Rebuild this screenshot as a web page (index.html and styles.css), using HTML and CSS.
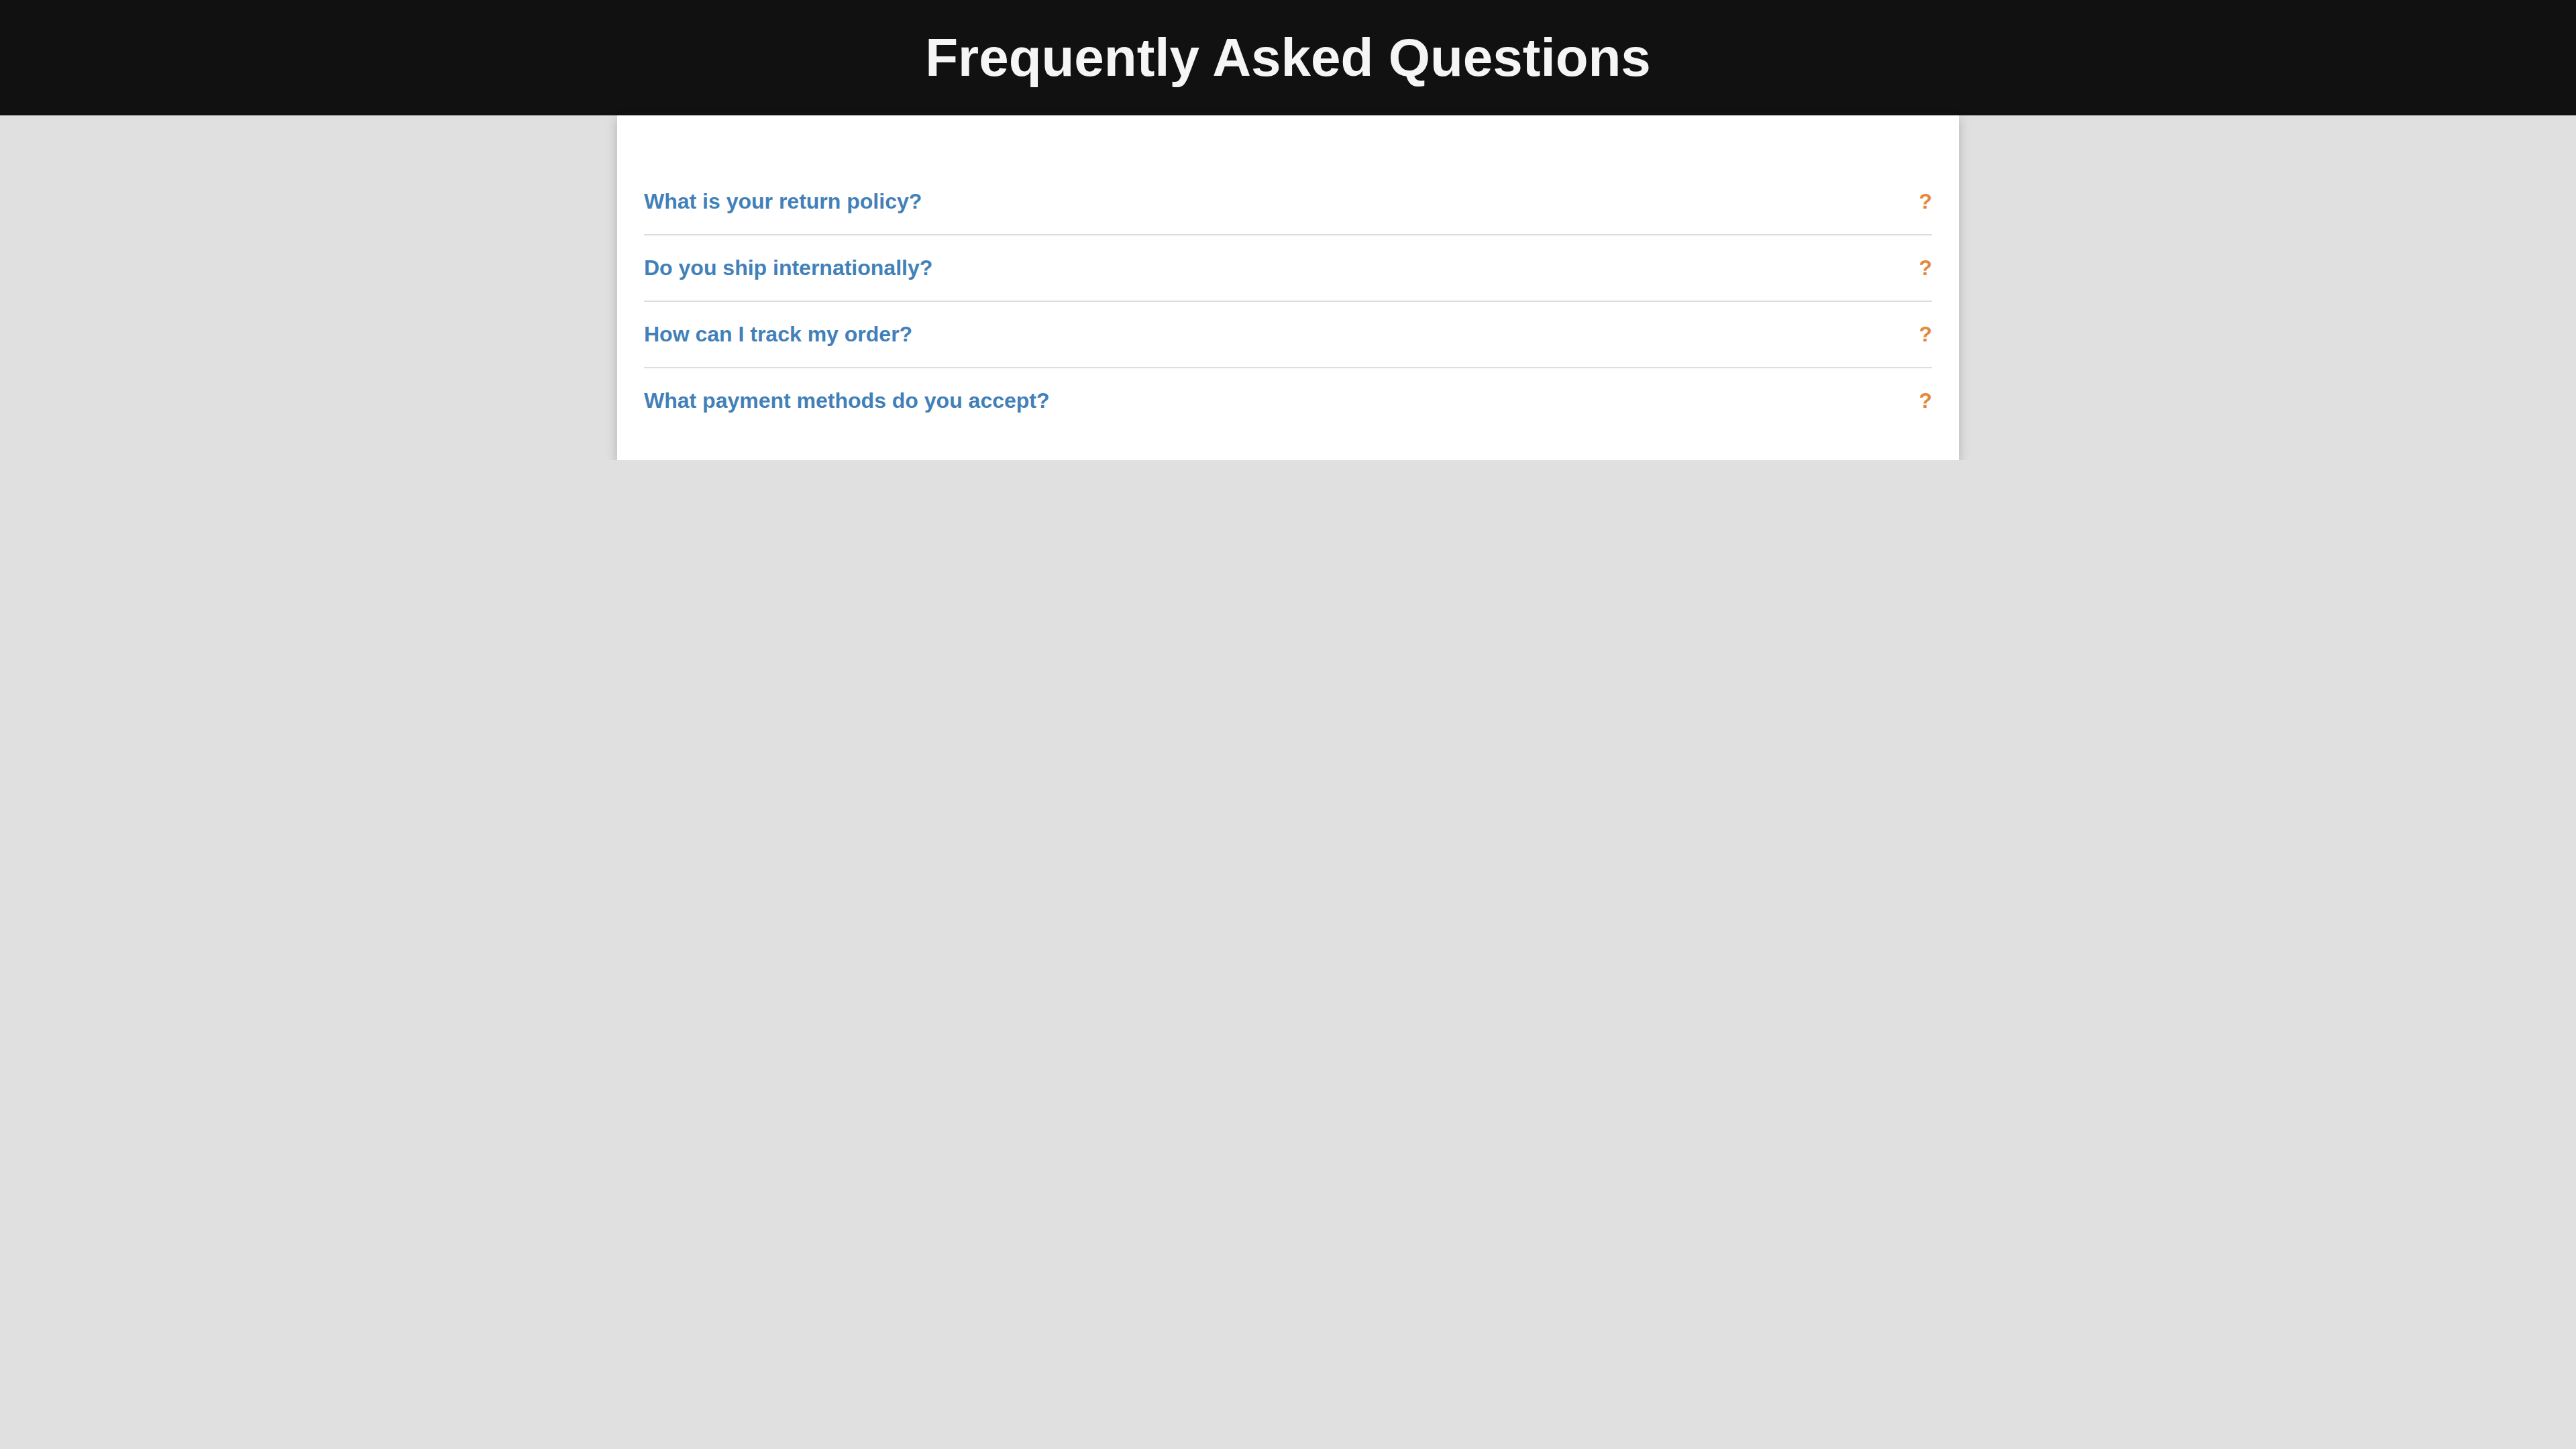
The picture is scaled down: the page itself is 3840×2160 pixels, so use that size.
FILE: index.html
```html
<!DOCTYPE html>
<html lang="en">
<head>
    <meta charset="UTF-8">
    <meta name="viewport" content="width=device-width, initial-scale=1.0">
    <title>FAQ</title>
    <link rel="stylesheet" href="styles.css">
</head>
<body>

    <header class="top">
        <h1>Frequently Asked Questions</h1>
    </header>

    <main class="faq">
        <div class="faq-item">
            <span class="question">What is your return policy?</span>
            <span class="mark">?</span>
        </div>
        <div class="faq-item">
            <span class="question">Do you ship internationally?</span>
            <span class="mark">?</span>
        </div>
        <div class="faq-item">
            <span class="question">How can I track my order?</span>
            <span class="mark">?</span>
        </div>
        <div class="faq-item">
            <span class="question">What payment methods do you accept?</span>
            <span class="mark">?</span>
        </div>
    </main>

</body>
</html>
```

FILE: styles.css
```css
body {
  margin: 0;
  background: #e0e0e0;
  font-family: "Liberation Sans", Arial, Helvetica, sans-serif;
}

.top {
  background: #111111;
  padding: 40px 0;
  text-align: center;
}

.top h1 {
  margin: 0;
  font-size: 80px;
  font-weight: bold;
  color: #f5f5f5;
}

.faq {
  width: 2000px;
  box-sizing: border-box;
  margin: 0 auto;
  padding: 80px 40px 40px;
  background: #ffffff;
  box-shadow: 0 5px 16px rgba(0, 0, 0, 0.22);
}

.faq-item {
  display: flex;
  justify-content: space-between;
  align-items: baseline;
  padding: 30px 0;
  border-bottom: 2px solid #dddddd;
  font-size: 32px;
  font-weight: bold;
  cursor: pointer;
}

.faq-item:last-child {border-bottom: none;}

.question {color: #4180b8;}

.mark {color: #e4873a;}
```
